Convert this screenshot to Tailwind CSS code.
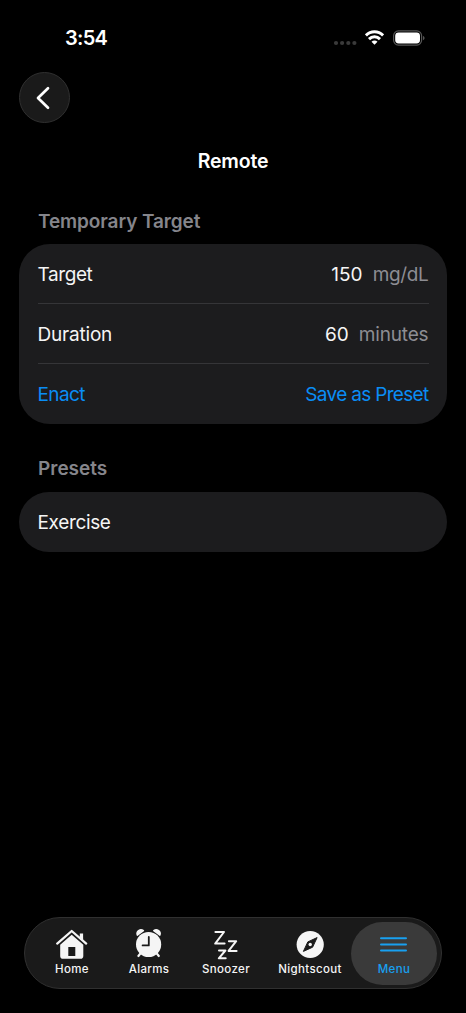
<!DOCTYPE html>
<html lang="en">
<head>
<meta charset="utf-8">
<meta name="viewport" content="width=device-width, initial-scale=1">
<title>Remote</title>
<script src="https://cdn.jsdelivr.net/npm/@tailwindcss/browser@4"></script>
</head>
<body class="bg-black">
<div class="flex h-[1013px] w-[466px] flex-col overflow-hidden bg-black font-['Inter',sans-serif] text-[19px] leading-6 text-[#f5f5f5]">
  <header class="flex h-[72px] shrink-0 items-start justify-between pt-[26px] pr-[41px] pl-[65px]">
    <span class="text-[20px] font-semibold tracking-[-0.7px] text-white">3:54</span>
    <div class="flex h-6 items-center">
      <svg class="mt-[10px] mr-[8px]" width="24" height="6" viewBox="0 0 24 6" fill="#3a3a3a"><circle cx="3" cy="3" r="2.1"/><circle cx="9.1" cy="3" r="2.1"/><circle cx="15.3" cy="3" r="2.1"/><circle cx="21.4" cy="3" r="2.1"/></svg>
      <svg class="mr-[9px] -mt-px" width="19" height="15" viewBox="0 0 19 15" fill="none" stroke="#fff" stroke-width="3"><path d="M.9 5.4C5.7.6 13.3.6 18.1 5.4"/><path d="M4 9.1C7.1 6 11.9 6 15 9.1"/><path d="M6.5 11.8C8.2 10.2 10.8 10.2 12.5 11.8L9.5 14.8Z" fill="#fff" stroke="none"/></svg>
      <svg width="32" height="16" viewBox="0 0 32 16"><rect x=".6" y=".9" width="28" height="14.2" rx="4.8" fill="none" stroke="#555" stroke-width="1.2"/><rect x="2.2" y="2.5" width="24.8" height="11" rx="3.4" fill="#fff"/><path d="M30 5.9C32.1 6.6 32.1 9.6 30 10.3Z" fill="#555"/></svg>
    </div>
  </header>
  <button class="ml-[19px] flex size-[51px] shrink-0 items-center justify-center rounded-full border border-[#303030] bg-[#1a1a1a]">
    <svg class="mr-[4px]" width="14" height="24" viewBox="0 0 14 24" fill="none" stroke="#fff" stroke-width="2.7" stroke-linecap="round" stroke-linejoin="round"><path d="M12 2.3L2 12L12 21.7"/></svg>
  </button>
  <h1 class="mt-[26px] text-center text-[19.5px] font-semibold tracking-[-0.2px] text-white">Remote</h1>
  <main class="flex flex-col px-[19px]">
    <h2 class="mt-[37px] px-[19px] font-semibold tracking-[-0.1px] text-[#85858b]">Temporary Target</h2>
    <section class="mt-[10px] flex h-[180px] flex-col rounded-[31px] bg-[#1c1c1e] pr-[18.5px] pl-[18.5px]">
      <div class="flex h-[60px] items-center justify-between border-b border-[#353538] pt-[3px]"><span class="tracking-[-0.4px]">Target</span><span class="flex gap-[10px]"><span class="tracking-[0.1px]">150</span><span class="tracking-[-0.35px] text-[#8d8d93]">mg/dL</span></span></div>
      <div class="flex h-[60px] items-center justify-between border-b border-[#353538] pt-[3px]"><span class="tracking-[-0.2px]">Duration</span><span class="flex gap-[10px]"><span>60</span><span class="tracking-[-0.15px] text-[#8d8d93]">minutes</span></span></div>
      <div class="flex h-[60px] items-center justify-between pt-[2px] text-[#0a8df5]"><span class="tracking-[-0.6px]">Enact</span><span class="tracking-[-0.68px]">Save as Preset</span></div>
    </section>
    <h2 class="mt-[33px] px-[19px] font-semibold text-[#85858b]">Presets</h2>
    <section class="mt-[11px] flex h-[60px] items-center rounded-[30px] bg-[#1c1c1e] px-[18.5px] pt-[2px] tracking-[-0.35px]">Exercise</section>
  </main>
  <nav class="mt-auto mb-[24px] ml-[24px] flex h-[72px] w-[418px] shrink-0 items-center rounded-full border border-[#303030] bg-[#1a1a1a] pl-[8px] text-[11.5px] leading-4 font-medium tracking-[0.35px]">
    <a class="flex h-[63px] w-[78px] flex-col items-center pt-[5px]">
      <svg width="34" height="34" viewBox="0 0 34 34" fill="#f5f5f5"><path d="M2.2 16.6L16.7 4L31.2 16.6" fill="none" stroke="#f5f5f5" stroke-width="2.3" stroke-linecap="round" stroke-linejoin="round"/><path d="M24.8 6.4H28.1V13.4L24.8 10.6Z"/><path fill-rule="evenodd" d="M16.7 7.8L28.3 17.8V28.9Q28.3 31.7 25.5 31.7H8Q5.2 31.7 5.2 28.9V17.8ZM13.3 20V29H20.3V20Z"/></svg>
      <span>Home</span>
    </a>
    <a class="flex h-[63px] w-[76px] flex-col items-center pt-[5px]">
      <svg width="34" height="34" viewBox="0 0 34 34"><path d="M5.3 8.1A3.9 3.9 0 0 1 11.4 3.7ZM27.9 8.1A3.9 3.9 0 0 0 21.8 3.7Z" fill="#f5f5f5" stroke="#f5f5f5" stroke-width="1.5" stroke-linejoin="round"/><path d="M9.1 25.6L6.4 29M24.1 25.6L26.8 29" stroke="#f5f5f5" stroke-width="2.2" stroke-linecap="round"/><circle cx="16.6" cy="17.5" r="12.6" fill="#f5f5f5"/><path d="M16.8 9.9V18.4H10.6" fill="none" stroke="#1a1a1a" stroke-width="1.8" stroke-linecap="round" stroke-linejoin="round"/></svg>
      <span>Alarms</span>
    </a>
    <a class="flex h-[63px] w-[78px] flex-col items-center pt-[5px]">
      <svg width="34" height="34" viewBox="0 0 34 34" fill="none" stroke="#f5f5f5" stroke-width="2" stroke-linecap="round" stroke-linejoin="round"><path d="M6.4 5H15L6.2 16.6H15.6"/><path d="M19.9 14.2H27.2L19.6 23.9H27.6"/><path d="M10 23.5H16.4L9.8 31.3H16.7"/></svg>
      <span>Snoozer</span>
    </a>
    <a class="flex h-[63px] w-[90px] flex-col items-center pt-[5px]">
      <svg width="34" height="34" viewBox="0 0 34 34"><circle cx="17.2" cy="17.5" r="13.6" fill="#f5f5f5"/><path d="M24.1 10.6L19.6 20.2L10.4 24.4L14.8 14.9Z" fill="#1a1a1a" stroke="#1a1a1a" stroke-linejoin="round"/><circle cx="17.2" cy="17.5" r="1.7" fill="#f5f5f5"/></svg>
      <span>Nightscout</span>
    </a>
    <a class="-ml-[4px] flex h-[63px] w-[86px] flex-col items-center rounded-full bg-[#3a3a3a] pt-[5px] text-[#18a0f0]">
      <svg width="34" height="34" viewBox="0 0 34 34" fill="none" stroke="currentColor" stroke-width="2" stroke-linecap="round"><path d="M4 11.3H29M4 17.4H29M4 23.5H29"/></svg>
      <span>Menu</span>
    </a>
  </nav>
</div>
</body>
</html>
